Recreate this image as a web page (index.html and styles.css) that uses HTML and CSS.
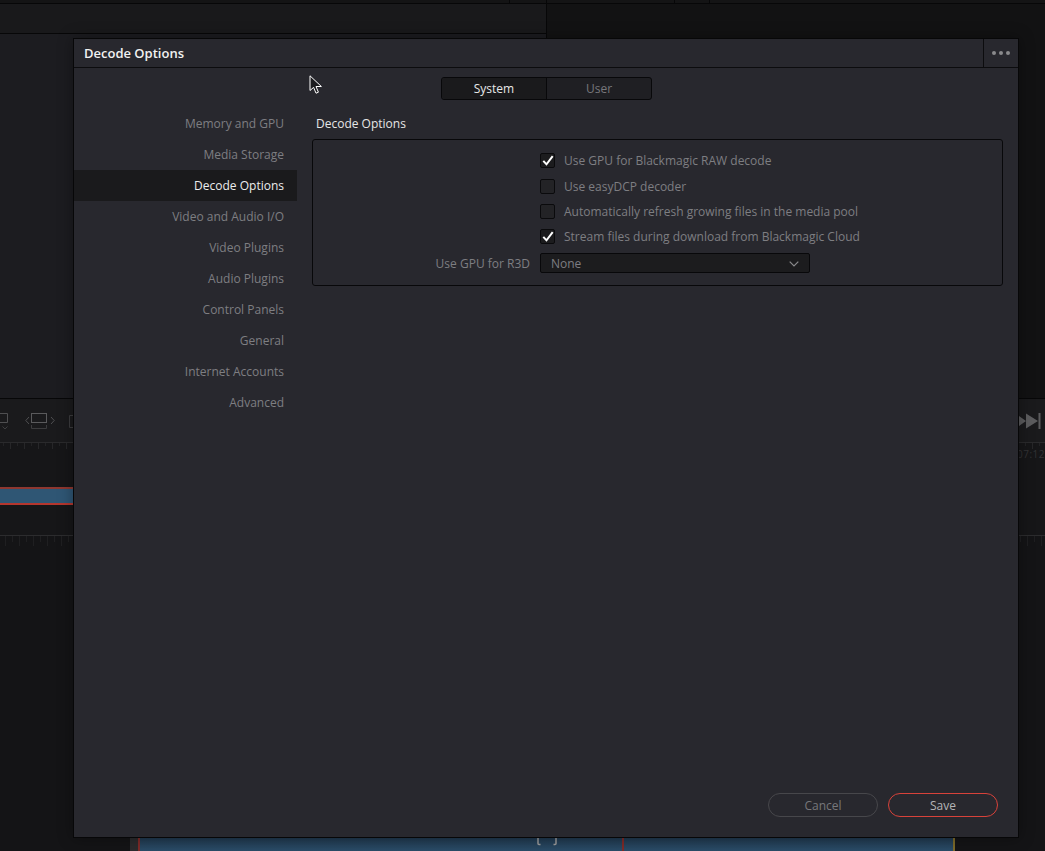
FILE: index.html
```html
<!DOCTYPE html>
<html lang="en">
<head>
  <meta charset="UTF-8">
  <title>Decode Options</title>
  <link rel="stylesheet" href="styles.css">
</head>
<body>
  <!-- app behind the dialog -->
  <div class="backdrop">
    <div class="bg-topbar">
      <i class="tick t1"></i><i class="tick t2"></i><i class="tick t3"></i><i class="tick t4"></i>
    </div>
    <div class="bg-left-head"></div>
    <div class="bg-right-head"></div>
    <div class="bg-left-body"></div>
    <div class="bg-toolbar">
      <svg class="tool tool-a" width="12" height="22" viewBox="0 0 12 22" fill="none" stroke="#4f4f51" stroke-width="1">
        <path d="M0 .5H7.500V9.500H0"/>
        <path d="M2.500 13.500L5 16 7.500 13.500" stroke="#3f3f41"/>
      </svg>
      <svg class="tool tool-b" width="30" height="18" viewBox="0 0 30 18" fill="none" stroke="#4f4f51" stroke-width="1">
        <path d="M4 5L.8 8.500 4 12M26 5l3.200 3.500L26 12"/>
        <rect x="6.500" y="1.500" width="15" height="9" stroke="#5a5a5c"/>
        <path d="M6.500 13v3.500h15V13" stroke="#3c3c3e"/>
      </svg>
      <svg class="tool tool-c" width="4" height="14" viewBox="0 0 4 14" fill="none" stroke="#3c3c3e"><path d="M4 .5H.5v12H4"/></svg>
      <svg class="tool tool-end" width="22" height="16" viewBox="0 0 22 16" fill="#5c5c5e"><path d="M0 3L7 8 0 13zM7 .5L19 8 7 15.500z"/><rect x="19.500" y="0" width="2" height="16"/></svg>
    </div>
    <div class="bg-ruler"></div>
    <div class="bg-timecode">07:12</div>
    <div class="bg-clip"></div>
    <div class="bg-ruler-low"></div>
    <div class="bg-strip">
      <i class="strip-cut c1"></i>
      <i class="strip-cut c2"></i>
      <svg class="strip-mark" width="20" height="8" viewBox="0 0 20 8" fill="none" stroke="#9a9a9a" stroke-width="1.500">
        <path d="M1 0V5.500Q1 6.500 2 6.500H3.500M19 0V5.500Q19 6.500 18 6.500H16.500"/>
      </svg>
    </div>
  </div>

  <svg class="cursor" width="14" height="20" viewBox="0 0 14 20">
    <path d="M1 .8V15.500L4.600 12.400 7 18.200 9.400 17.200 7 11.500H12.400Z" fill="#1c1c1f" stroke="#fff" stroke-width="1"/>
  </svg>

  <div class="dialog">
    <header class="dialog-head">
      <h1>Decode Options</h1>
      <button class="more"><i></i><i></i><i></i></button>
    </header>

    <div class="tabs-row">
      <div class="tabs">
        <span class="tab active">System</span>
        <span class="tab">User</span>
      </div>
    </div>

    <div class="dialog-main">
      <nav class="side">
        <a>Memory and GPU</a>
        <a>Media Storage</a>
        <a class="current">Decode Options</a>
        <a>Video and Audio I/O</a>
        <a>Video Plugins</a>
        <a>Audio Plugins</a>
        <a>Control Panels</a>
        <a>General</a>
        <a>Internet Accounts</a>
        <a>Advanced</a>
      </nav>

      <section class="content">
        <h2>Decode Options</h2>
        <div class="panel">
          <label class="row r1">
            <span class="box"><svg width="12" height="11" viewBox="0 0 12 11"><path d="M1.300 5.800L4.500 9.300 10.700 1.200" fill="none" stroke="#fff" stroke-width="2"/></svg></span>
            Use GPU for Blackmagic RAW decode
          </label>
          <label class="row r2"><span class="box"></span>Use easyDCP decoder</label>
          <label class="row r3"><span class="box"></span>Automatically refresh growing files in the media pool</label>
          <label class="row r4">
            <span class="box"><svg width="12" height="11" viewBox="0 0 12 11"><path d="M1.300 5.800L4.500 9.300 10.700 1.200" fill="none" stroke="#fff" stroke-width="2"/></svg></span>
            Stream files during download from Blackmagic Cloud
          </label>
          <div class="row-select">
            <span class="select-label">Use GPU for R3D</span>
            <div class="select">
              <span>None</span>
              <svg width="10" height="6" viewBox="0 0 10 6"><path d="M.7 .7L5 5 9.300 .7" fill="none" stroke="#8a8a8c" stroke-width="1.200"/></svg>
            </div>
          </div>
        </div>
      </section>
    </div>

    <footer class="dialog-foot">
      <button class="btn cancel">Cancel</button>
      <button class="btn save">Save</button>
    </footer>
  </div>
</body>
</html>
```

FILE: styles.css
```css
* {
  box-sizing: border-box;
}
html, body {
  margin: 0;
  height: 100%;
}
body {
  position: relative;
  width: 1045px;
  height: 851px;
  overflow: hidden;
  background-color: #121213;
  font-family: "Open Sans", "Noto Sans", sans-serif;
  font-size: 12px;
}

/* backdrop: the app behind the dialog */
.backdrop div, .tick, .tool {
  position: absolute;
}
.bg-topbar {
  left: 0;
  top: 0;
  width: 1045px;
  height: 4px;
  background: #141415;
  border-bottom: 1px solid #070708;
}
.tick {
  top: 0;
  width: 1px;
  height: 3px;
  background: #070708;
}
.t1 { left: 509px; }
.t2 { left: 546px; }
.t3 { left: 674px; }
.t4 { left: 709px; }
.bg-left-head {
  left: 0;
  top: 4px;
  width: 547px;
  height: 30px;
  background: #19191b;
  border-right: 1px solid #070708;
  border-bottom: 1px solid #070708;
}
.bg-right-head {
  left: 547px;
  top: 4px;
  width: 498px;
  height: 34px;
  background: #121213;
}
.bg-left-body {
  left: 0;
  top: 34px;
  width: 547px;
  height: 364px;
  background: #1c1c20;
  border-right: 1px solid #070708;
}
.bg-toolbar {
  left: 0;
  top: 398px;
  width: 1045px;
  height: 45px;
  background: #1a1a1c;
  border-top: 1px solid #070708;
  border-bottom: 1px solid #2a2a2c;
}
.tool-a { left: 0; top: 14px; }
.tool-b { left: 25px; top: 13px; }
.tool-c { left: 69px; top: 16px; }
.tool-end { left: 1019px; top: 14px; }
.bg-ruler {
  left: 0;
  top: 443px;
  width: 1045px;
  height: 92px;
  background-color: #161618;
  background-image:
    repeating-linear-gradient(90deg, transparent 0 10px, #272729 10px 11px, transparent 11px 14px),
    repeating-linear-gradient(90deg, transparent 0 3px, #232325 3px 4px, transparent 4px 14px);
  background-size: 100% 6px, 100% 3px;
  background-repeat: no-repeat;
}
.bg-timecode {
  left: 1017px;
  top: 447px;
  color: #333335;
  font-size: 10px;
  letter-spacing: .5px;
}
.bg-clip {
  left: 0;
  top: 487px;
  width: 73px;
  height: 18px;
  background: #2f5674;
  border-top: 2px solid #8e3730;
  border-bottom: 2px solid #b5362e;
}
.bg-ruler-low {
  left: 0;
  top: 535px;
  width: 1045px;
  height: 316px;
  background-color: #141416;
  border-top: 1px solid #2c2c2e;
  background-image:
    repeating-linear-gradient(90deg, transparent 0 5px, #1f1f21 5px 6px, transparent 6px 14px),
    repeating-linear-gradient(90deg, transparent 0 12px, #1f1f21 12px 13px, transparent 13px 14px);
  background-size: 100% 10px, 100% 6px;
  background-repeat: no-repeat;
}
.bg-strip {
  left: 130px;
  top: 838px;
  width: 825px;
  height: 13px;
  background: linear-gradient(#20394f, #2a4c68);
  border-left: 8px solid #2b2b2d;
  border-right: 2px solid #7c6a2a;
}
.strip-cut {
  position: absolute;
  top: 0;
  width: 2px;
  height: 13px;
  background: #7d2a28;
}
.c1 { left: 0; }
.c2 { left: 484px; }
.strip-mark {
  position: absolute;
  left: 399px;
  top: 0;
}

.cursor {
  position: absolute;
  left: 309px;
  top: 75px;
  z-index: 5;
}

/* dialog */
.dialog {
  position: absolute;
  left: 73px;
  top: 38px;
  width: 946px;
  height: 800px;
  display: flex;
  flex-direction: column;
  background: #28282e;
  border: 1px solid #070708;
  box-shadow: 0 0 14px rgba(0,0,0,.35);
}
.dialog-head {
  flex: none;
  height: 29px;
  display: flex;
  justify-content: space-between;
  align-items: stretch;
  border-bottom: 1px solid #0c0c0e;
}
.dialog-head h1 {
  margin: 0;
  padding-left: 10px;
  font-size: 13px;
  font-weight: 600;
  line-height: 28px;
  color: #f2f2f2;
}
.more {
  width: 35px;
  padding: 0;
  display: flex;
  align-items: center;
  justify-content: center;
  gap: 3px;
  background: none;
  border: 0;
  border-left: 1px solid #0c0c0e;
}
.more i {
  width: 4px;
  height: 4px;
  border-radius: 50%;
  background: #8a8a8c;
}

.tabs-row {
  flex: none;
  height: 38px;
  display: flex;
  justify-content: center;
  align-items: flex-start;
  padding-top: 9px;
  padding-left: 1px;
}
.tabs {
  display: flex;
  width: 211px;
  height: 23px;
  background: #1f1f23;
  border: 1px solid #08080a;
  border-radius: 3px;
  overflow: hidden;
}
.tab {
  flex: 1;
  text-align: center;
  line-height: 21px;
  color: #77777b;
}
.tab.active {
  background: #1a1a1c;
  color: #e8e8e8;
  border-right: 1px solid #08080a;
}

.dialog-main {
  flex: 1;
  display: flex;
  min-height: 0;
}
.side {
  flex: none;
  width: 223px;
  display: flex;
  flex-direction: column;
  padding-top: 2px;
}
.side a {
  height: 31px;
  line-height: 31px;
  padding-right: 13px;
  text-align: right;
  color: #7e7e82;
}
.side a.current {
  background: #1a1a1c;
  color: #ececec;
}
.content {
  flex: 1;
  padding-left: 15px;
  padding-right: 15px;
}
.content h2 {
  margin: 0;
  padding-left: 4px;
  height: 33px;
  font-size: 12px;
  font-weight: 400;
  line-height: 35px;
  color: #e6e6e6;
}
.panel {
  height: 147px;
  padding-top: 8px;
  border: 1px solid #08080a;
  border-radius: 3px;
  color: #7e7e82;
}
.row {
  display: flex;
  align-items: center;
  gap: 9px;
  height: 25px;
  margin-left: 227px;
}
.r2 { height: 26px; }
.r3 { height: 24px; }
.r4 { height: 26px; }
.box {
  flex: none;
  width: 15px;
  height: 15px;
  display: flex;
  align-items: center;
  justify-content: center;
  background: #1c1c1e;
  border: 1px solid #0a0a0c;
  border-radius: 2px;
}
.box:empty {
  background: #232326;
}
.row-select {
  display: flex;
  align-items: center;
  margin-top: 2px;
  height: 25px;
}
.select-label {
  width: 217px;
  text-align: right;
  margin-right: 10px;
}
.select {
  width: 270px;
  height: 20px;
  margin-bottom: 1px;
  padding: 1px 10px 0;
  display: flex;
  align-items: center;
  justify-content: space-between;
  background: #1c1c1e;
  border: 1px solid #08080a;
  border-radius: 2px;
}

.dialog-foot {
  flex: none;
  height: 44px;
  display: flex;
  justify-content: flex-end;
  gap: 10px;
  padding-right: 20px;
}
.btn {
  width: 110px;
  height: 24px;
  padding: 0;
  background: none;
  border-radius: 12px;
  font: inherit;
}
.cancel {
  border: 1px solid #47474b;
  color: #77777b;
}
.save {
  border: 1px solid #d8423a;
  color: #b4b4b6;
}
```
